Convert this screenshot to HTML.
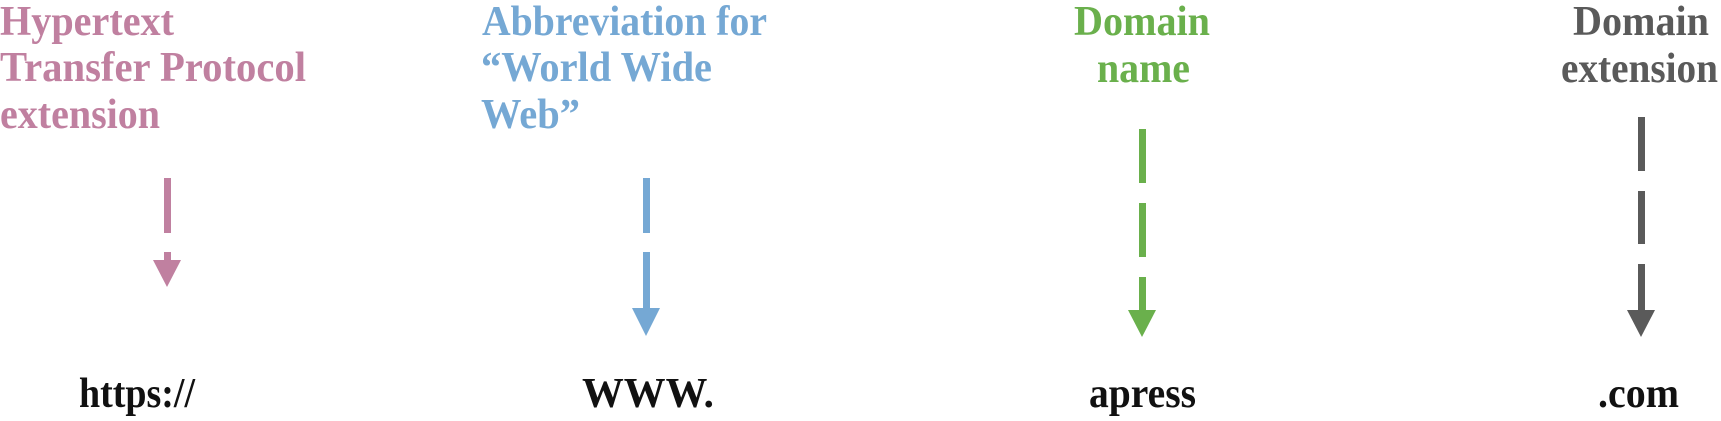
<!DOCTYPE html>
<html><head><meta charset="utf-8"><style>
html,body{margin:0;padding:0;background:#fff;width:1721px;height:421px;overflow:hidden}
svg{display:block}
text{font-family:"Liberation Serif",serif;font-weight:bold;font-size:42px}
</style></head><body>
<svg width="1721" height="421" viewBox="0 0 1721 421" xmlns="http://www.w3.org/2000/svg">
<g fill="#c080a0">
<text x="0" y="35" textLength="174" lengthAdjust="spacingAndGlyphs">Hypertext</text>
<text x="0" y="81" textLength="306" lengthAdjust="spacingAndGlyphs">Transfer Protocol</text>
<text x="0" y="128" textLength="160" lengthAdjust="spacingAndGlyphs">extension</text>
<rect x="164" y="178" width="7" height="55"/>
<rect x="164" y="252" width="7" height="10"/>
<polygon points="153,260 181,260 167,287"/>
</g>
<g fill="#75a8d4">
<text x="482" y="35" textLength="285" lengthAdjust="spacingAndGlyphs">Abbreviation for</text>
<text x="481" y="81" textLength="231" lengthAdjust="spacingAndGlyphs">“World Wide</text>
<text x="481" y="128" textLength="99" lengthAdjust="spacingAndGlyphs">Web”</text>
<rect x="643" y="178" width="7" height="55"/>
<rect x="643" y="252" width="7" height="56"/>
<polygon points="632,308 660,308 646,336"/>
</g>
<g fill="#6ab04c">
<text x="1074" y="35" textLength="136" lengthAdjust="spacingAndGlyphs">Domain</text>
<text x="1097" y="82" textLength="93" lengthAdjust="spacingAndGlyphs">name</text>
<rect x="1139" y="129" width="7" height="54"/>
<rect x="1139" y="203" width="7" height="54"/>
<rect x="1139" y="277" width="7" height="34"/>
<polygon points="1128,310 1156,310 1142,337"/>
</g>
<g fill="#5a5a5a">
<text x="1573" y="35" textLength="136" lengthAdjust="spacingAndGlyphs">Domain</text>
<text x="1561" y="82" textLength="157" lengthAdjust="spacingAndGlyphs">extension</text>
<rect x="1638" y="117" width="7" height="54"/>
<rect x="1638" y="191" width="7" height="53"/>
<rect x="1638" y="264" width="7" height="47"/>
<polygon points="1627,310 1655,310 1641,337"/>
</g>
<g fill="#111">
<text x="79" y="407" textLength="116" lengthAdjust="spacingAndGlyphs">https://</text>
<text x="582" y="407" textLength="132" lengthAdjust="spacingAndGlyphs">WWW.</text>
<text x="1089" y="407" textLength="107" lengthAdjust="spacingAndGlyphs">apress</text>
<text x="1598" y="407" textLength="81" lengthAdjust="spacingAndGlyphs">.com</text>
</g>
</svg>
</body></html>
